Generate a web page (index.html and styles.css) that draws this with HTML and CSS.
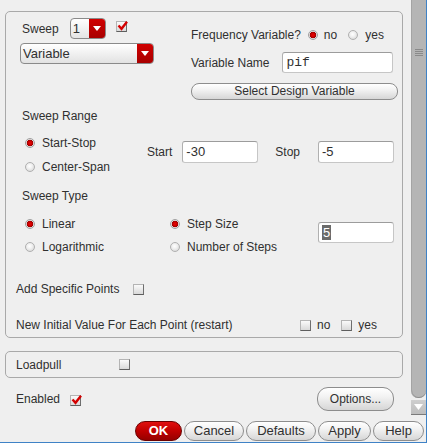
FILE: index.html
```html
<!DOCTYPE html>
<html>
<head>
<meta charset="utf-8">
<link rel="stylesheet" href="styles.css">
</head>
<body>
<div class="frame">
  <div class="scrollarea">
    <div class="content">
      <div class="panel main">
        <div class="top">
          <div class="topleft">
            <div class="sweeprow">
              <span class="lbl sweep-lbl">Sweep</span>
              <div class="spin">
                <span class="spinval">1</span>
                <span class="drop"><svg width="8" height="5" viewBox="0 0 8 5"><path d="M0 0 H8 L4 5 Z" fill="#fff"/></svg></span>
              </div>
              <span class="check on sweep-check"><svg width="11" height="10" viewBox="0 0 11 10"><path d="M1.5 4.5 L4.5 7.8 L10 0.8" fill="none" stroke="#d40000" stroke-width="2.4"/></svg></span>
            </div>
            <div class="combo">
              <span class="comboval">Variable</span>
              <span class="drop"><svg width="8" height="5" viewBox="0 0 8 5"><path d="M0 0 H8 L4 5 Z" fill="#fff"/></svg></span>
            </div>
          </div>
          <div class="topright">
            <div class="freqrow">
              <span class="lbl">Frequency Variable?</span>
              <span class="radio on freq-no"></span><span class="lbl opt-txt">no</span>
              <span class="radio freq-yes"></span><span class="lbl opt-txt yes-txt">yes</span>
            </div>
            <div class="namerow">
              <span class="lbl">Variable Name</span>
              <div class="field mono name-field">pif</div>
            </div>
            <div class="pill wide">Select Design Variable</div>
          </div>
        </div>

        <div class="section-label range-label">Sweep Range</div>
        <div class="range">
          <div class="radios range-radios">
            <div class="opt"><span class="radio on"></span><span class="opt-label">Start-Stop</span></div>
            <div class="opt"><span class="radio"></span><span class="opt-label">Center-Span</span></div>
          </div>
          <div class="limits">
            <span class="lbl">Start</span>
            <div class="field limit start-field">-30</div>
            <span class="lbl stop-lbl">Stop</span>
            <div class="field limit stop-field">-5</div>
          </div>
        </div>

        <div class="section-label type-label">Sweep Type</div>
        <div class="type">
          <div class="radios type-col">
            <div class="opt"><span class="radio on"></span><span class="opt-label">Linear</span></div>
            <div class="opt"><span class="radio"></span><span class="opt-label">Logarithmic</span></div>
          </div>
          <div class="radios type-col2">
            <div class="opt"><span class="radio on"></span><span class="opt-label">Step Size</span></div>
            <div class="opt"><span class="radio"></span><span class="opt-label">Number of Steps</span></div>
          </div>
          <div class="field limit step-field"><span class="sel">5</span></div>
        </div>

        <div class="line addrow">
          <span class="lbl">Add Specific Points</span>
          <span class="check add-check"></span>
        </div>
        <div class="line initrow">
          <span class="lbl init-lbl">New Initial Value For Each Point (restart)</span>
          <span class="check"></span><span class="lbl opt-txt">no</span>
          <span class="check init-yes"></span><span class="lbl opt-txt">yes</span>
        </div>
      </div>

      <div class="panel loadpull">
        <span class="lbl load-lbl">Loadpull</span>
        <span class="check"></span>
      </div>

      <div class="enabledrow">
        <span class="lbl">Enabled</span>
        <span class="check on enabled-check"><svg width="11" height="10" viewBox="0 0 11 10"><path d="M1.5 4.5 L4.5 7.8 L10 0.8" fill="none" stroke="#d40000" stroke-width="2.4"/></svg></span>
        <div class="pill options">Options...</div>
      </div>
    </div>
    <div class="vscroll">
      <div class="thumb">
        <div class="grip"></div>
      </div>
      <div class="arrow"><svg width="9" height="6" viewBox="0 0 9 6"><path d="M0 0 H9 L4.5 6 Z" fill="#fff"/></svg></div>
    </div>
  </div>
  <div class="buttons">
    <div class="pill btn ok">OK</div>
    <div class="pill btn cancel">Cancel</div>
    <div class="pill btn defaults">Defaults</div>
    <div class="pill btn apply">Apply</div>
    <div class="pill btn help">Help</div>
  </div>
</div>
</body>
</html>
```

FILE: styles.css
```css
html, body {
  margin: 0;
  padding: 0;
}
body {
  background: #efefef;
  font: 12px "Liberation Sans", Arial, sans-serif;
  color: #303030;
}
.frame {
  width: 427px;
  height: 443px;
  box-sizing: border-box;
  border-right: 1px solid #3f82c6;
  border-bottom: 1px solid #3f82c6;
  display: flex;
  flex-direction: column;
}
.scrollarea {
  display: flex;
  height: 415px;
}
.content {
  width: 411px;
  padding-top: 11px;
  box-sizing: border-box;
}
.panel {
  margin-left: 5px;
  width: 398px;
  box-sizing: border-box;
  border: 1px solid #a9a9a9;
  border-radius: 5px;
}
.main {
  height: 327px;
}
.lbl {
  white-space: nowrap;
  line-height: 16px;
}

/* top section */
.top {
  display: flex;
  padding: 6px 0 0 14px;
  height: 82px;
}
.topleft {
  width: 134px;
}
.sweeprow {
  display: flex;
  align-items: center;
  height: 21px;
}
.sweep-lbl {
  margin-left: 2px;
}
.spin {
  margin-left: 11px;
  width: 36px;
  height: 21px;
  box-sizing: border-box;
  border: 1px solid #8a8a8a;
  border-radius: 4px;
  display: flex;
  overflow: hidden;
  background: linear-gradient(#ffffff, #e4e4e4);
}
.spinval {
  flex: 1;
  padding-left: 2px;
  line-height: 19px;
  font-size: 13px;
}
.drop {
  width: 16px;
  background: linear-gradient(#d00000, #a80000);
  display: flex;
  align-items: center;
  justify-content: center;
}
.check {
  width: 11px;
  height: 11px;
  box-sizing: border-box;
  border: 1px solid;
  border-color: #b4b4b4 #6e6e6e #5e5e5e #b4b4b4;
  background: linear-gradient(#fafafa, #d9d9d9);
  display: inline-flex;
  align-items: center;
  justify-content: center;
  position: relative;
  flex: none;
}
.check.on svg {
  position: absolute;
  left: 0;
  top: -1px;
}
.sweep-check {
  margin-left: 10px;
  align-self: flex-start;
  margin-top: 3px;
}
.combo {
  margin-top: 4px;
  width: 134px;
  height: 21px;
  box-sizing: border-box;
  border: 1px solid #8a8a8a;
  border-radius: 4px;
  display: flex;
  overflow: hidden;
  background: linear-gradient(#ffffff, #e2e2e2);
}
.comboval {
  flex: 1;
  padding-left: 2px;
  line-height: 19px;
  font-size: 13px;
}
.topright {
  margin-left: 37px;
}
.freqrow {
  margin-top: 9px;
  height: 16px;
  display: flex;
  align-items: center;
}
.radio {
  width: 10px;
  height: 10px;
  box-sizing: border-box;
  border-radius: 50%;
  border: 1px solid #b0b0b0;
  background: radial-gradient(circle at 45% 40%, #ffffff 0, #f0f0f0 40%, #cfcfcf 100%);
  flex: none;
}
.radio.on {
  border-color: #a0a0a0;
  background: radial-gradient(circle at 50% 50%, #f00000 0, #c80000 2px, #9a0000 3px, #e6e6e6 3.6px, #d0d0d0 100%);
}
.freq-no {
  margin-left: 7px;
}
.freq-yes {
  margin-left: 11px;
}
.opt-txt {
  margin-left: 6px;
}
.yes-txt {
  margin-left: 7px;
}
.namerow {
  margin-top: 9px;
  display: flex;
  align-items: center;
  height: 21px;
}
.field {
  height: 21px;
  box-sizing: border-box;
  background: #fff;
  border: 1px solid #c6c6c6;
  border-top-color: #9c9c9c;
  border-left-color: #b0b0b0;
  border-radius: 3px;
  line-height: 19px;
  padding-left: 3px;
  font-size: 13px;
}
.mono {
  font-family: "Liberation Mono", "Courier New", monospace;
  font-size: 13px;
}
.name-field {
  margin-left: 13px;
  width: 111px;
}
.pill {
  box-sizing: border-box;
  border: 1px solid #8d8d8d;
  border-radius: 10px;
  background: linear-gradient(#ffffff, #f2f2f2 40%, #d6d6d6);
  text-align: center;
  white-space: nowrap;
  color: #303030;
}
.wide {
  margin-top: 10px;
  width: 207px;
  height: 17px;
  line-height: 15px;
  border-radius: 8px;
}

/* sweep range */
.section-label {
  padding-left: 16px;
  height: 16px;
  line-height: 16px;
}
.range-label {
  margin-top: 8px;
}
.range {
  display: flex;
  margin-top: 11px;
  padding-left: 19px;
}
.radios {
  display: flex;
  flex-direction: column;
  gap: 8px;
}
.range-radios {
  width: 122px;
}
.opt {
  display: flex;
  align-items: center;
  height: 16px;
}
.opt-label {
  margin-left: 7px;
  white-space: nowrap;
}
.limits {
  display: flex;
  align-items: center;
  margin-top: 6px;
  height: 22px;
}
.limit {
  width: 76px;
  height: 22px;
  line-height: 20px;
}
.start-field {
  margin-left: 10px;
}
.stop-lbl {
  margin-left: 17px;
}
.stop-field {
  margin-left: 18px;
}

/* sweep type */
.type-label {
  margin-top: 13px;
}
.type {
  display: flex;
  margin-top: 12px;
  padding-left: 19px;
}
.type-col, .type-col2 {
  width: 145px;
  gap: 7px;
}
.type-col2 {
  width: 148px;
}
.step-field {
  margin-top: 6px;
  height: 21px;
  line-height: 19px;
}
.sel {
  background: #6a6a6a;
  color: #fff;
  padding: 0 1px;
}

.line {
  display: flex;
  align-items: center;
  height: 16px;
  padding-left: 10px;
}
.addrow {
  margin-top: 26px;
}
.add-check {
  margin-left: 14px;
}
.initrow {
  margin-top: 20px;
}
.init-lbl {
  width: 284px;
}
.init-yes {
  margin-left: 11px;
}

/* loadpull */
.loadpull {
  margin-top: 13px;
  height: 27px;
  display: flex;
  align-items: center;
  padding-left: 10px;
}
.load-lbl {
  width: 103px;
}

/* enabled row */
.enabledrow {
  margin-top: 9px;
  height: 24px;
  display: flex;
  align-items: center;
  padding-left: 16px;
  padding-right: 17px;
}
.enabled-check {
  margin-left: 10px;
  margin-top: 3px;
}
.options {
  margin-left: auto;
  width: 77px;
  height: 24px;
  line-height: 22px;
  border-radius: 11px;
}

/* scrollbar */
.vscroll {
  width: 15px;
  display: flex;
  flex-direction: column;
}
.thumb {
  height: 399px;
  background: #b5b5b5;
  border-left: 1px solid #a4a4a4;
  border-radius: 0 0 7px 7px;
  box-sizing: border-box;
  box-shadow: inset 0 -1px 0 #8e8e8e;
  padding-top: 49px;
}
.grip {
  margin-left: 3px;
  width: 8px;
  height: 8px;
  background: repeating-linear-gradient(#8a8a8a 0, #8a8a8a 1px, transparent 1px, transparent 2px);
}
.arrow {
  margin-top: 2px;
  height: 14px;
  background: linear-gradient(#cfcfcf, #bdbdbd);
  border-bottom: 1px solid #7a7a7a;
  display: flex;
  align-items: center;
  justify-content: center;
}

/* bottom buttons */
.buttons {
  height: 27px;
  display: flex;
  justify-content: flex-end;
  padding: 6px 2px 0 0;
  box-sizing: border-box;
  gap: 2px;
}
.btn {
  height: 20px;
  line-height: 18px;
  font-size: 13px;
}
.ok {
  width: 47px;
  background: linear-gradient(#e01010, #c00000 50%, #960000);
  border-color: #6a0000;
  color: #fff;
  font-weight: bold;
  font-size: 13px;
}
.cancel { width: 60px; }
.defaults { width: 70px; }
.apply { width: 53px; }
.help { width: 51px; }
```
